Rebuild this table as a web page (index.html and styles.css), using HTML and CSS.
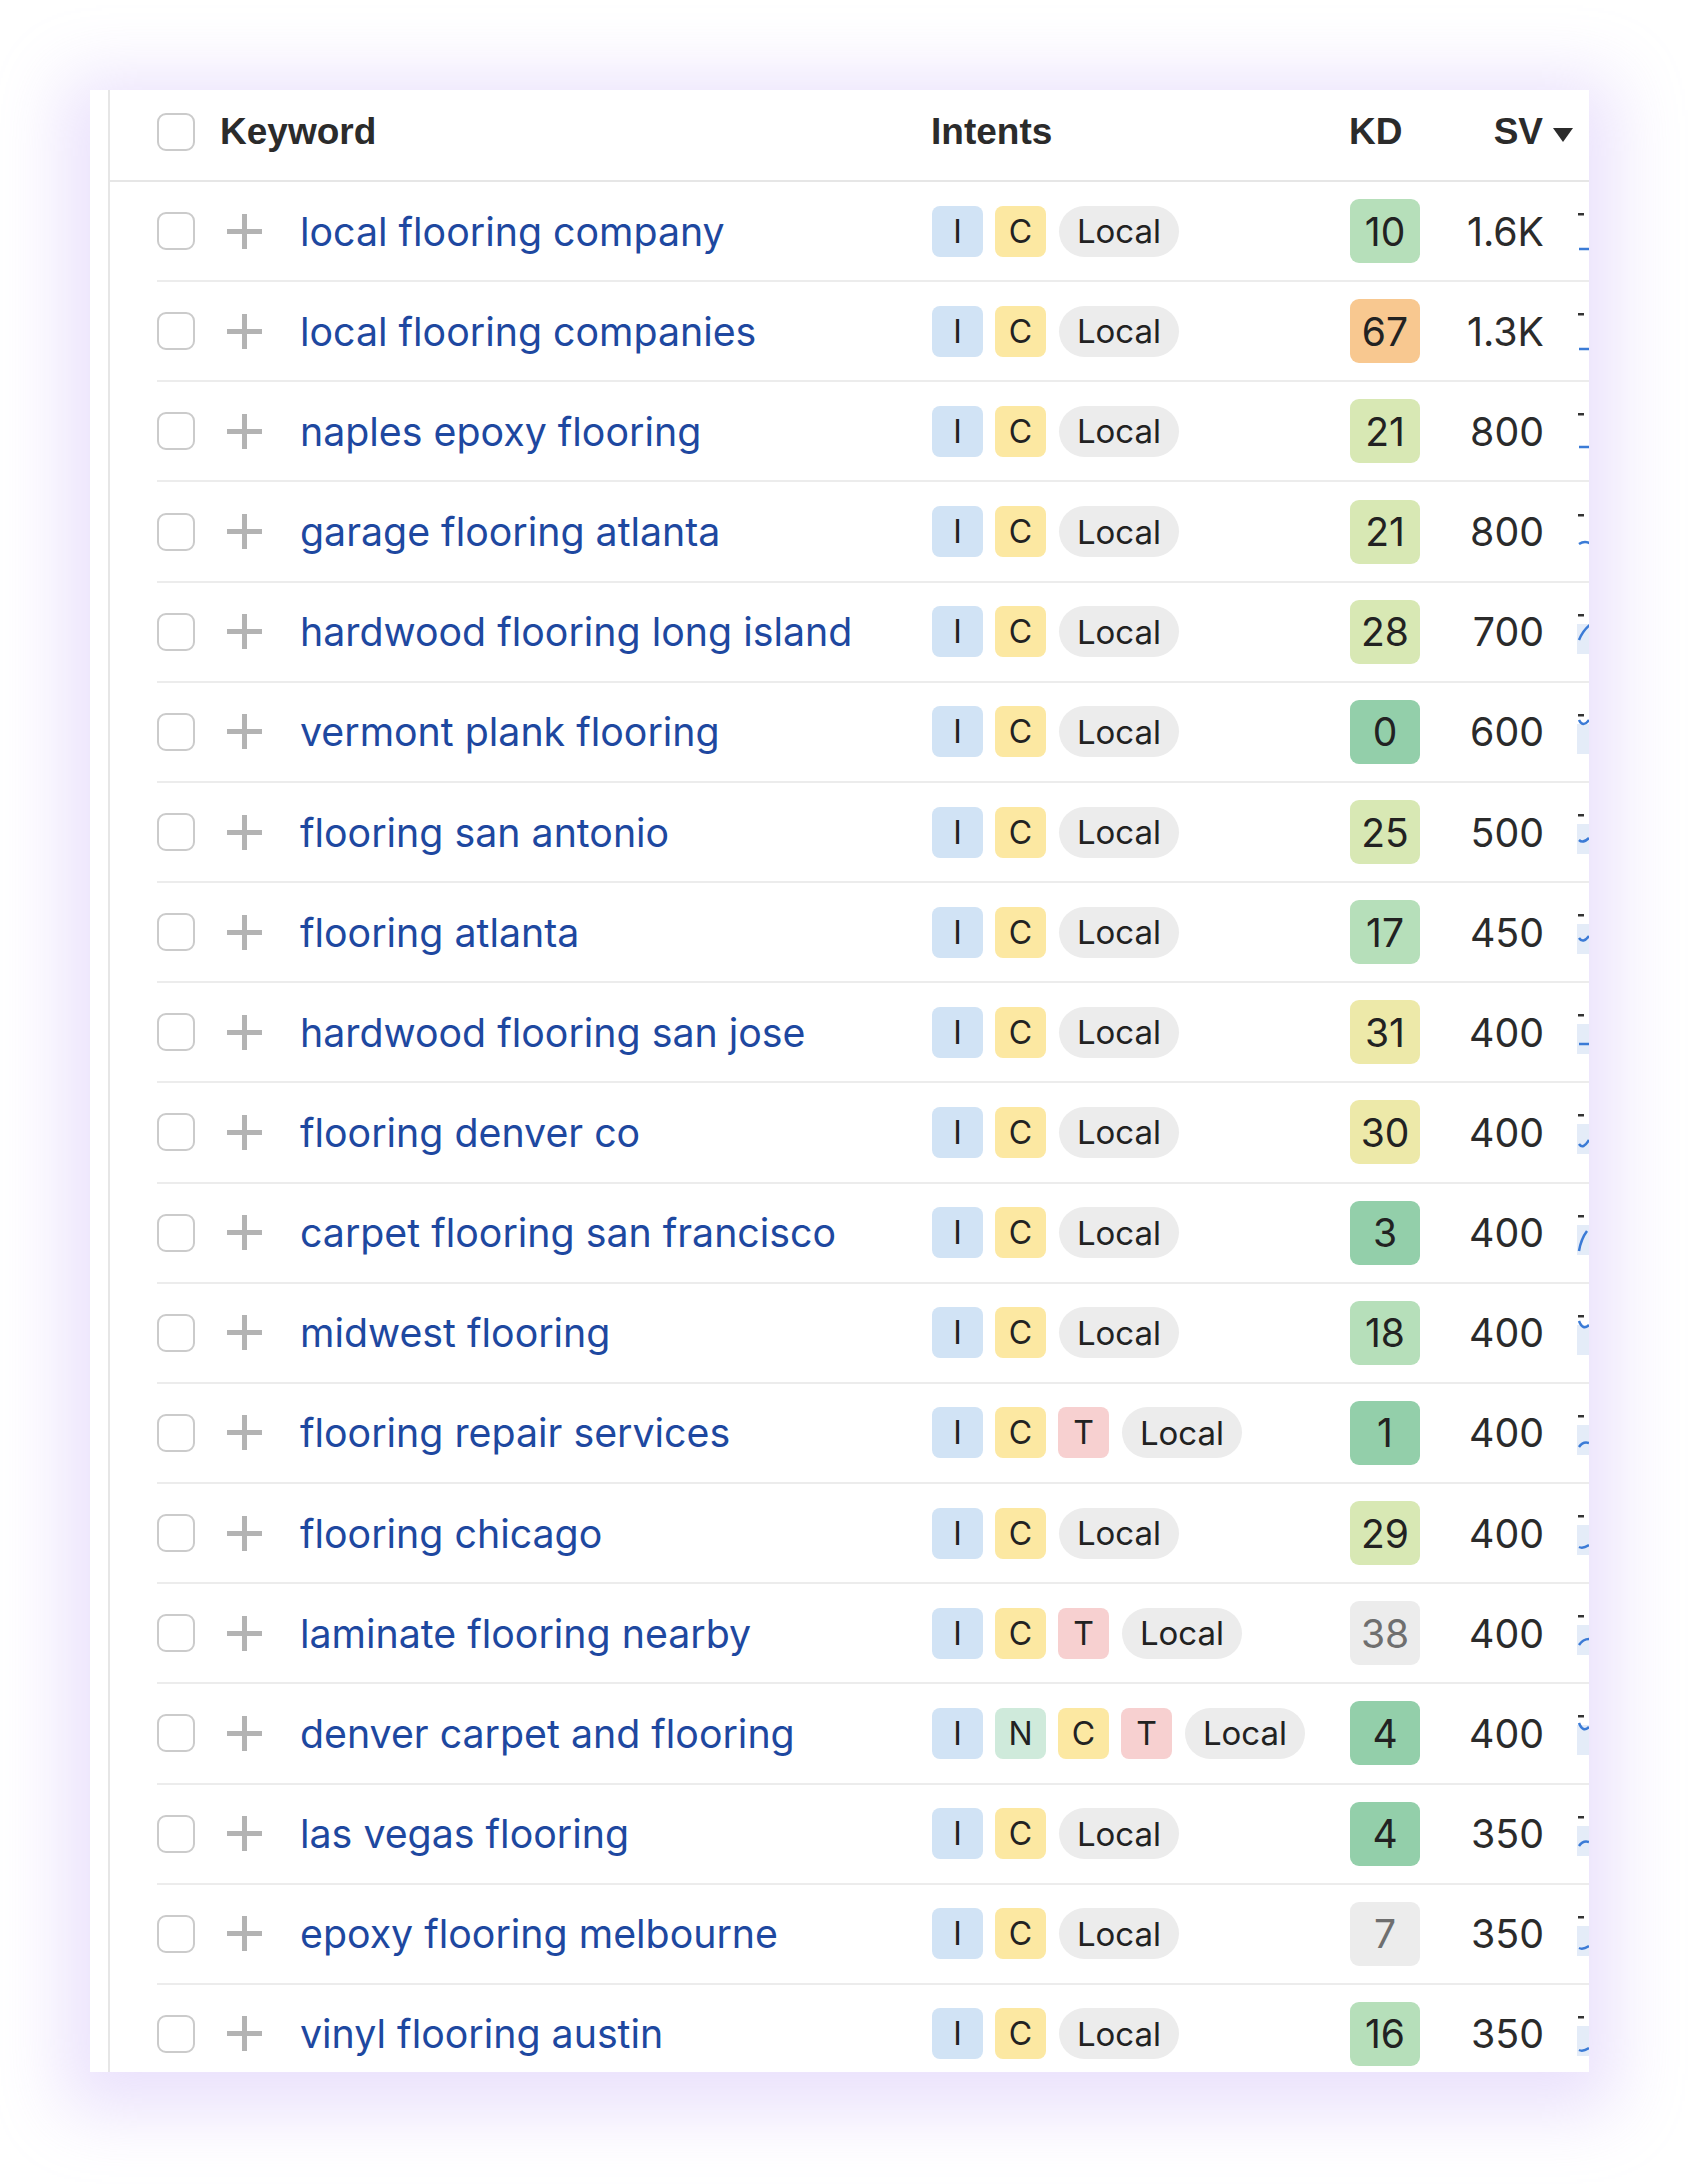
FILE: index.html
```html
<!DOCTYPE html>
<html>
<head>
<meta charset="utf-8">
<link rel="stylesheet" href="styles.css">
</head>
<body>
<div class="card">
  <div class="table">
    <div class="thead">
      <span class="cb"></span>
      <span class="th th-kw">Keyword</span>
      <span class="th th-int">Intents</span>
      <span class="th th-kd">KD</span>
      <span class="th th-sv">SV</span>
      <span class="caret"></span>
    </div>
    <div class="rows" id="rows"></div>
  </div>
</div>
<script src="app.js"></script>
</body>
</html>
```

FILE: app.js
```js
const data = [
  ["local flooring company", "IC", 10, "1.6K", "g2"],
  ["local flooring companies", "IC", 67, "1.3K", "or"],
  ["naples epoxy flooring", "IC", 21, "800", "yg"],
  ["garage flooring atlanta", "IC", 21, "800", "yg"],
  ["hardwood flooring long island", "IC", 28, "700", "yg"],
  ["vermont plank flooring", "IC", 0, "600", "g1"],
  ["flooring san antonio", "IC", 25, "500", "yg"],
  ["flooring atlanta", "IC", 17, "450", "g2"],
  ["hardwood flooring san jose", "IC", 31, "400", "ye"],
  ["flooring denver co", "IC", 30, "400", "ye"],
  ["carpet flooring san francisco", "IC", 3, "400", "g1"],
  ["midwest flooring", "IC", 18, "400", "g2"],
  ["flooring repair services", "ICT", 1, "400", "g1"],
  ["flooring chicago", "IC", 29, "400", "yg"],
  ["laminate flooring nearby", "ICT", 38, "400", "gr"],
  ["denver carpet and flooring", "INCT", 4, "400", "g1"],
  ["las vegas flooring", "IC", 4, "350", "g1"],
  ["epoxy flooring melbourne", "IC", 7, "350", "gr"],
  ["vinyl flooring austin", "IC", 16, "350", "g2"]
];
const sparks = [
  "M2 40 L60 40", "M2 40 L60 40", "M2 38 L60 38", "M2 34 Q8 30 14 34",
  "M2 30 Q6 20 14 14", "M2 10 Q6 18 12 10", "M2 30 Q6 34 12 28", "M2 28 Q6 34 12 26",
  "M2 34 L60 34", "M2 34 Q6 40 12 30", "M2 40 Q4 28 10 20", "M2 10 Q6 20 12 14",
  "M2 36 Q6 30 12 32", "M2 36 Q6 38 12 34", "M2 34 Q6 28 12 28", "M2 12 Q6 22 12 16",
  "M2 34 Q6 28 12 30", "M2 36 Q6 38 12 34", "M2 38 Q6 40 12 36"
];
const rows = document.getElementById("rows");
data.forEach((d, i) => {
  const r = document.createElement("div");
  r.className = "row";
  let badges = d[1].split("").map(c => `<span class="ib ib-${c}">${c}</span>`).join("");
  badges += `<span class="local">Local</span>`;
  const fill = i >= 4 ? `<rect x="0" y="14" width="60" height="30" fill="#e4ecf8"/>` : "";
  r.innerHTML = `
    <span class="cb"></span>
    <svg class="plus" viewBox="0 0 35 35"><rect x="15" y="0" width="5" height="35"/><rect x="0" y="15" width="35" height="5"/></svg>
    <span class="kw">${d[0]}</span>
    <span class="intents">${badges}</span>
    <span class="kd kd-${d[4]}">${d[2]}</span>
    <span class="sv">${d[3]}</span>
    <svg class="spark" viewBox="0 0 60 44">${fill}<rect x="1" y="4" width="6" height="2.5" fill="#333"/><path d="${sparks[i]}" fill="none" stroke="#3b7bd6" stroke-width="2.5"/></svg>`;
  rows.appendChild(r);
});
```

FILE: styles.css
```css
* { box-sizing: border-box; }
html, body { margin: 0; padding: 0; background: #ffffff; }
body { width: 1700px; height: 2184px; overflow: hidden; font-family: "Inter", "Liberation Sans", sans-serif; }

.card {
  margin: 90px 0 0 90px;
  width: 1499px;
  height: 1982px;
  background: #ffffff;
  overflow: hidden;
  padding-left: 18px;
  box-shadow: 0 14px 64px 26px rgba(190, 162, 246, 0.32);
}
.table {
  border-left: 2px solid #e6e6e6;
  height: 100%;
}
.thead {
  height: 92px;
  border-bottom: 2px solid #e6e6e6;
  display: flex;
  align-items: center;
  padding-left: 47px;
  padding-bottom: 6px;
}
.th {
  font-family: "Liberation Sans", Arial, sans-serif;
  font-weight: 700;
  font-size: 37px;
  color: #2b2b2b;
}
.th-kw { margin-left: 25px; width: 711px; }
.th-int { width: 418px; }
.th-kd { width: 70px; }
.th-sv { width: 124px; text-align: right; }
.caret {
  margin-left: 10px;
  width: 0; height: 0;
  border-left: 10.5px solid transparent;
  border-right: 10.5px solid transparent;
  border-top: 14px solid #2b2b2b;
  margin-top: 6px;
}
.cb {
  width: 38px; height: 38px;
  border: 2.5px solid #cbcbcb;
  border-radius: 9px;
  flex: none;
  background: #fff;
}
.row {
  height: 100.17px;
  margin-left: 47px;
  border-bottom: 2.5px solid #ececec;
  display: flex;
  align-items: center;
  white-space: nowrap;
}
.plus { width: 35px; height: 35px; margin-left: 32px; fill: #b3b3b3; flex: none; }
.kw {
  margin-left: 38px;
  width: 632px;
  font-size: 39.3px;
  color: #1e48a0;
  flex: none;
}
.intents { width: 418px; display: flex; align-items: center; gap: 12px; flex: none; }
.ib {
  width: 51px; height: 51px;
  border-radius: 8px;
  display: flex; align-items: center; justify-content: center;
  font-size: 32px;
  color: #222;
}
.ib-I { background: #d1e3f5; }
.ib-C { background: #fce8a2; }
.ib-T { background: #f7d0d0; }
.ib-N { background: #cfeadb; }
.local {
  height: 51px;
  width: 120px;
  justify-content: center;
  border-radius: 26px;
  background: #ececec;
  display: flex; align-items: center;
  font-size: 33px;
  color: #222;
  margin-left: 1px;
}
.kd {
  width: 70px; height: 64px;
  border-radius: 9px;
  display: flex; align-items: center; justify-content: center;
  font-size: 39px;
  color: #222;
  flex: none;
}
.kd-g1 { background: #93cfaa; }
.kd-g2 { background: #b6dfba; }
.kd-yg { background: #d8e8b4; }
.kd-ye { background: #ede9a9; }
.kd-or { background: #f8c890; }
.kd-gr { background: #ececec; color: #6f6f6f; }
.sv {
  width: 124px;
  text-align: right;
  font-size: 39.3px;
  color: #2b2b2b;
  flex: none;
}
.spark { width: 60px; height: 44px; margin-left: 33px; flex: none; }
```
